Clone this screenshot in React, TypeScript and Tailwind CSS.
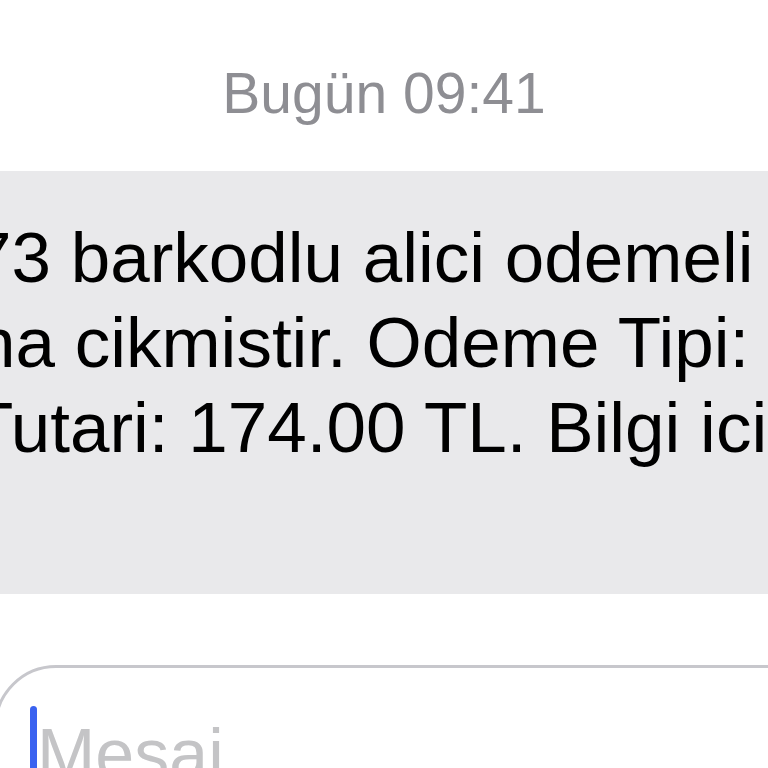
export default function App() {
  const lines = [
    { text: "73 barkodlu alici odemeli gonderiniz", offset: "ml-[-28px]" },
    { text: "na cikmistir. Odeme Tipi: Nakit", offset: "ml-[-24px]" },
    { text: "Tutari: 174.00 TL. Bilgi icin", offset: "ml-[-30px]" },
  ];

  return (
    <div
      className="w-[768px] h-[768px] overflow-hidden bg-white flex flex-col"
      style={{ fontFamily: '"Liberation Sans", Arial, sans-serif' }}
    >
      {/* Timestamp */}
      <div className="shrink-0 pt-[65px] text-center text-[57px] leading-none text-[#8e8e93] whitespace-nowrap">
        Bugün 09:41
      </div>

      {/* Incoming message bubble, cropped on both sides */}
      <div className="shrink-0 mt-[49px] h-[423px] bg-[#e9e9eb] overflow-hidden pt-[44px]">
        {lines.map((line) => (
          <div
            key={line.text}
            className={`${line.offset} whitespace-nowrap text-[71px] leading-[85px] text-black`}
          >
            {line.text}
          </div>
        ))}
      </div>

      {/* Message input */}
      <div className="shrink-0 mt-[71px] ml-[-6px] mr-[-80px] h-[200px] rounded-[62px] border-[3px] border-[#c7c7cc] flex items-start pl-[33px] pt-[38px]">
        <div className="w-[7px] h-[90px] rounded-full bg-[#3a62f0]" />
        <div className="mt-[13px] text-[70px] leading-none text-[#c4c4c6] whitespace-nowrap">
          Mesaj
        </div>
      </div>
    </div>
  );
}
